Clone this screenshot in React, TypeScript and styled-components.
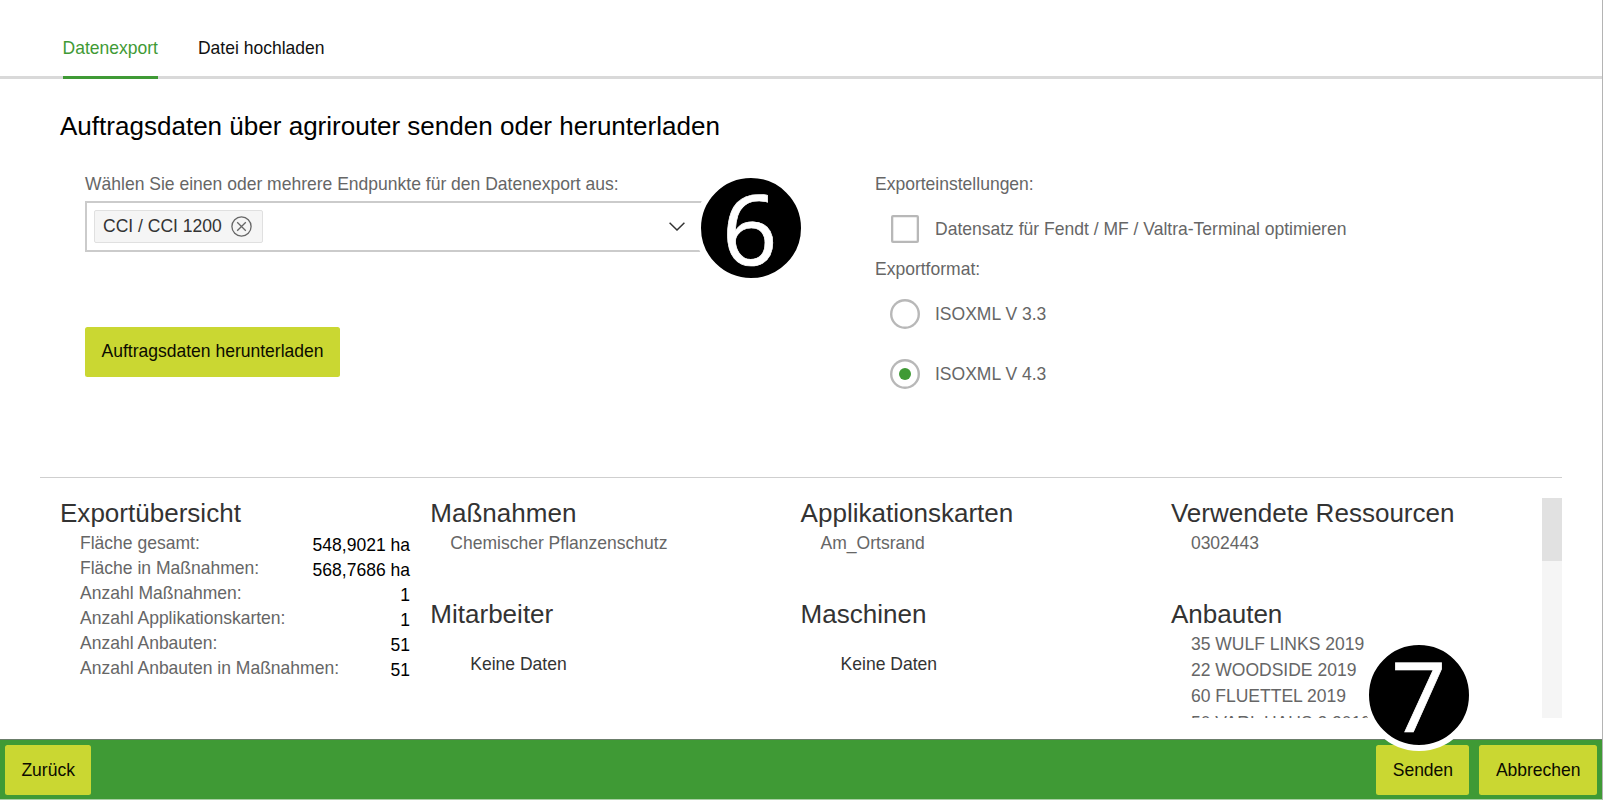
import React from "react";
import styled, { createGlobalStyle } from "styled-components";

const Global = createGlobalStyle`
  * { box-sizing: border-box; }
  body { margin: 0; background: #fff; font-family: "Liberation Sans", Arial, sans-serif; font-size: 17.53px; color: #666; overflow: hidden; }
`;

const Page = styled.div`
  width: 1603px;
  height: 800px;
  display: flex;
  flex-direction: column;
  border-right: 1px solid #b4b4b4;
  border-bottom: 1px solid #a9d0a5;
  overflow: hidden;
`;

const Tabs = styled.nav`
  height: 79px;
  flex: none;
  display: flex;
  gap: 40px;
  padding-left: 62.5px;
  box-shadow: inset 0 -3px #d9d9d9;
`;

const Tab = styled.div<{ $active?: boolean }>`
  height: 79px;
  padding-top: 37px;
  line-height: 22px;
  white-space: nowrap;
  color: ${(p) => (p.$active ? "#3f9a35" : "#111")};
  border-bottom: 3px solid ${(p) => (p.$active ? "#3f9a35" : "transparent")};
`;

const Title = styled.h1`
  margin: 0;
  flex: none;
  height: 91px;
  padding: 32px 0 0 60px;
  font-size: 26.04px;
  font-weight: 400;
  line-height: 30px;
  color: #000;
`;

const Form = styled.section`
  height: 307px;
  flex: none;
  display: flex;
  padding-left: 85px;
`;

const Endpoints = styled.div`
  width: 790px;
  display: flex;
  flex-direction: column;
  align-items: flex-start;
`;

const Label = styled.div`
  height: 31px;
  padding-top: 3px;
  line-height: 22px;
  white-space: nowrap;
`;

const SelectRow = styled.div`
  display: flex;
  height: 51px;
  position: relative;
`;

const Select = styled.div`
  width: 617px;
  height: 51px;
  border: 2px solid #cbcbcb;
  border-right: 0;
  display: flex;
  align-items: center;
  justify-content: space-between;
  padding: 0 17px 0 7px;
`;

const Chip = styled.div`
  height: 33px;
  width: 169px;
  display: flex;
  align-items: center;
  justify-content: space-between;
  padding: 0 10px 0 8px;
  border: 1.5px solid #e0e0e0;
  border-radius: 2px;
  background: #f5f5f5;
  color: #333;
  margin-top: -1px;
  line-height: 20px;
  white-space: nowrap;
`;

const Marker = styled.div<{ $x: number; $y: number; $shift?: number }>`
  position: absolute;
  left: ${(p) => p.$x}px;
  top: ${(p) => p.$y}px;
  width: 112.4px;
  height: 112.4px;
  padding-right: ${(p) => p.$shift ?? 0}px;
  border: 6px solid #fff;
  border-radius: 50%;
  background: #000;
  color: #fff;
  font: 400 97px/98px "Open Sans", sans-serif;
  -webkit-text-stroke: 0.7px #fff;
  text-align: center;
`;

const Button = styled.button`
  height: 50px;
  padding: 0 16.4px;
  border: 0;
  border-radius: 2.5px;
  background: #cad732;
  color: #0c0c00;
  font: inherit;
  white-space: nowrap;
`;

const Download = styled(Button)`
  margin-top: 74.5px;
  width: 255px;
  padding: 0 16px 1px;
`;

const Settings = styled.div`
  display: flex;
  flex-direction: column;
`;

const Option = styled.label<{ $h: number; $top: number }>`
  display: flex;
  align-items: center;
  height: ${(p) => p.$h}px;
  margin-top: ${(p) => p.$top}px;
  padding-left: 15px;
  white-space: nowrap;
  line-height: 22px;
`;

const FormatLabel = styled.div`
  height: 22px;
  margin-top: 15px;
  line-height: 22px;
`;

const Check = styled.span`
  width: 28px;
  height: 28px;
  margin: 0 16px 0 1px;
  box-shadow: inset 0 0 0 2.3px #b8b8b8;
  border-radius: 2px;
`;

const Radio = styled.span<{ $on?: boolean }>`
  width: 30px;
  height: 30px;
  margin-right: 15px;
  box-shadow: inset 0 0 0 2.4px #b8b8b8;
  border-radius: 50%;
  display: grid;
  place-items: center;
  &::after {
    content: "";
    width: 12px;
    height: 12px;
    border-radius: 50%;
    background: ${(p) => (p.$on ? "#3f9a35" : "transparent")};
  }
`;

const Overview = styled.section`
  flex: none;
  height: 262px;
  margin: 0 40px;
  padding-top: 20px;
  border-top: 1px solid #cfcfcf;
  display: flex;
  justify-content: space-between;
`;

const Columns = styled.div`
  height: 220px;
  overflow: hidden;
  display: grid;
  grid-template-columns: repeat(4, 370.3px);
  grid-template-rows: 101px 119px;
  padding-left: 20px;
`;

const Block = styled.div<{ $tall?: boolean }>`
  grid-row: ${(p) => (p.$tall ? "span 2" : "auto")};
`;

const Heading = styled.h2`
  margin: 0;
  height: 32px;
  line-height: 30px;
  font-size: 26.04px;
  font-weight: 400;
  color: #333;
`;

const Stat = styled.div`
  height: 25px;
  width: 350px;
  padding-left: 20px;
  display: flex;
  justify-content: space-between;
  line-height: 26px;
  white-space: nowrap;
`;

const Value = styled.span`
  color: #000;
  padding-top: 2px;
`;

const Item = styled.div`
  padding-left: 20px;
  line-height: 26.2px;
  white-space: nowrap;
`;

const Empty = styled.div`
  padding: 18px 0 0 40px;
  line-height: 30px;
  color: #333;
`;

const Track = styled.div`
  width: 20px;
  height: 220px;
  background: #f5f5f5;
`;

const Thumb = styled.div`
  height: 63px;
  background: #e1e1e1;
`;

const Footer = styled.footer`
  position: relative;
  flex: 1;
  border-top: 1px solid #6b7d6a;
  background: #3f9a35;
  display: flex;
  align-items: flex-start;
  gap: 10px;
  padding: 5px 5px 0;
`;

const Spacer = styled.div`
  flex: 1;
`;

const stats = [
  ["Fläche gesamt:", "548,9021 ha"],
  ["Fläche in Maßnahmen:", "568,7686 ha"],
  ["Anzahl Maßnahmen:", "1"],
  ["Anzahl Applikationskarten:", "1"],
  ["Anzahl Anbauten:", "51"],
  ["Anzahl Anbauten in Maßnahmen:", "51"],
];

const implementsList = ["35 WULF LINKS 2019", "22 WOODSIDE 2019", "60 FLUETTEL 2019", "50 VARL HAUS 2 2019"];

const RemoveIcon = () => (
  <svg width="21" height="21" viewBox="0 0 21 21" fill="none" stroke="#666" strokeWidth="1.3">
    <circle cx="10.5" cy="10.5" r="9.6" />
    <path d="M6.2 6.2l8.6 8.6M14.8 6.2l-8.6 8.6" />
  </svg>
);

const Chevron = () => (
  <svg width="16" height="9" viewBox="0 0 16 9" fill="none" stroke="#333" strokeWidth="1.5">
    <path d="M.6.8L8 8L15.4.8" />
  </svg>
);

export default function App() {
  return (
    <Page>
      <Global />
      <Tabs>
        <Tab $active>Datenexport</Tab>
        <Tab>Datei hochladen</Tab>
      </Tabs>
      <Title>Auftragsdaten über agrirouter senden oder herunterladen</Title>
      <Form>
        <Endpoints>
          <Label>Wählen Sie einen oder mehrere Endpunkte für den Datenexport aus:</Label>
          <SelectRow>
            <Select>
              <Chip>
                CCI / CCI 1200
                <RemoveIcon />
              </Chip>
              <Chevron />
            </Select>
            <Marker $x={610} $y={-29} $shift={3}>6</Marker>
          </SelectRow>
          <Download>Auftragsdaten herunterladen</Download>
        </Endpoints>
        <Settings>
          <Label>Exporteinstellungen:</Label>
          <Option $h={28} $top={14}>
            <Check />
            Datensatz für Fendt / MF / Valtra-Terminal optimieren
          </Option>
          <FormatLabel>Exportformat:</FormatLabel>
          <Option $h={30} $top={19}>
            <Radio />
            ISOXML V 3.3
          </Option>
          <Option $h={30} $top={30}>
            <Radio $on />
            ISOXML V 4.3
          </Option>
        </Settings>
      </Form>
      <Overview>
        <Columns>
          <Block $tall>
            <Heading>Exportübersicht</Heading>
            {stats.map(([name, value]) => (
              <Stat key={name}>
                <span>{name}</span>
                <Value>{value}</Value>
              </Stat>
            ))}
          </Block>
          <Block>
            <Heading>Maßnahmen</Heading>
            <Item>Chemischer Pflanzenschutz</Item>
          </Block>
          <Block>
            <Heading>Applikationskarten</Heading>
            <Item>Am_Ortsrand</Item>
          </Block>
          <Block>
            <Heading>Verwendete Ressourcen</Heading>
            <Item>0302443</Item>
          </Block>
          <Block>
            <Heading>Mitarbeiter</Heading>
            <Empty>Keine Daten</Empty>
          </Block>
          <Block>
            <Heading>Maschinen</Heading>
            <Empty>Keine Daten</Empty>
          </Block>
          <Block>
            <Heading>Anbauten</Heading>
            {implementsList.map((name) => (
              <Item key={name}>{name}</Item>
            ))}
          </Block>
        </Columns>
        <Track>
          <Thumb />
        </Track>
      </Overview>
      <Footer>
        <Button>Zurück</Button>
        <Spacer />
        <Button>Senden</Button>
        <Button>Abbrechen</Button>
        <Marker $x={1362.6} $y={-101}>7</Marker>
      </Footer>
    </Page>
  );
}
